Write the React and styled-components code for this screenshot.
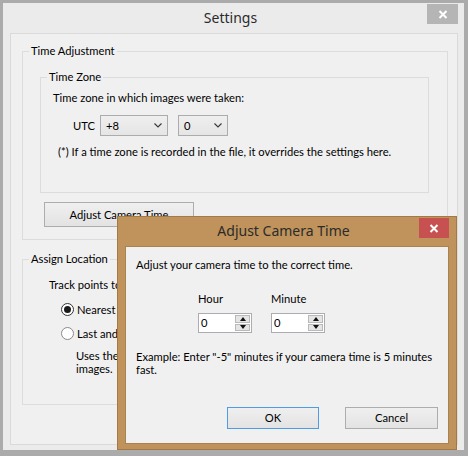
import styled, { createGlobalStyle } from "styled-components"

const GlobalStyle = createGlobalStyle`
  html, body { margin: 0; padding: 0; }
  body {
    width: 468px;
    height: 456px;
    overflow: hidden;
    background: #ffffff;
    font-family: Lato, "Noto Sans", sans-serif;
    font-size: 11.2px;
    color: #000;
  }
  * { box-sizing: border-box; }
`

const Screen = styled.div`
  position: relative;
  width: 468px;
  height: 456px;
`

const Window = styled.div`
  width: 468px;
  height: 456px;
  display: flex;
  flex-direction: column;
  background: #ebebeb;
  border-style: solid;
  border-color: #ababab;
  border-width: 3px 4px 6px 3px;
`

const TitleBar = styled.div`
  height: 30px;
  display: flex;
  align-items: flex-start;
  padding-right: 6px;
`

const TitleText = styled.div`
  flex: 1;
  text-align: center;
  font-family: "Noto Sans", sans-serif;
  font-size: 14px;
  line-height: 16px;
  padding-top: ${(p) => p.top || 7}px;
  padding-left: ${(p) => p.shift || 0}px;
  color: #2b2b2b;
`

const CloseButton = styled.div`
  width: ${(p) => p.w || 31}px;
  height: 20px;
  margin-top: ${(p) => p.top || 1}px;
  background: ${(p) => p.bg || "#b5b5b5"};
  display: flex;
  align-items: center;
  justify-content: center;
`

const Client = styled.div`
  height: 412px;
  margin: 0 6px 0 7px;
  background: #f0f0f0;
  border: 1px solid #dadada;
  padding: 9px 9px 0 11px;
  display: flex;
  flex-direction: column;
`

const Group = styled.fieldset`
  margin: ${(p) => p.mt || 0}px 0 0 0;
  padding: 0;
  border: 1px solid #dcdcdc;
  min-width: 0;
`

const Legend = styled.legend`
  margin-left: 6px;
  padding: 0 2px;
  line-height: 16px;
`

const GroupBody = styled.div`
  padding: ${(p) => p.pad};
`

const Line = styled.div`
  line-height: ${(p) => p.lh || 16}px;
  margin-top: ${(p) => p.mt || 0}px;
  padding-left: ${(p) => p.pl || 0}px;
  white-space: nowrap;
`

const Row = styled.div`
  display: flex;
  align-items: center;
  margin-top: ${(p) => p.mt || 0}px;
  padding-left: ${(p) => p.pl || 0}px;
`

const UtcLabel = styled.span`
  width: 27px;
  line-height: 16px;
`

const Select = styled.div`
  width: ${(p) => p.w}px;
  height: 21px;
  margin-left: ${(p) => p.ml || 0}px;
  border: 1px solid #acacac;
  background: linear-gradient(#efefef, #e5e5e5);
  display: flex;
  align-items: center;
  justify-content: space-between;
  padding: 0 5px 0 5px;
  line-height: 16px;
`

const PushButton = styled.div`
  width: ${(p) => p.w}px;
  height: ${(p) => p.h || 22}px;
  margin-top: ${(p) => p.mt || 0}px;
  margin-left: ${(p) => p.ml || 0}px;
  border: 1px solid ${(p) => (p.primary ? "#4f9be4" : "#adadad")};
  background: linear-gradient(#efefef, #e3e3e3);
  display: flex;
  align-items: center;
  justify-content: center;
  line-height: 16px;
`

const RadioRow = styled.div`
  display: flex;
  align-items: center;
  gap: 3px;
  height: 16px;
  margin-top: 8px;
  padding-left: 12px;
  white-space: nowrap;
`

const RadioCircle = styled.span`
  width: 13px;
  height: 13px;
  border-radius: 50%;
  border: 1px solid ${(p) => (p.checked ? "#333" : "#8a8a8a")};
  background: #fff;
  display: flex;
  align-items: center;
  justify-content: center;
  &::after {
    content: "";
    width: 7px;
    height: 7px;
    border-radius: 50%;
    background: ${(p) => (p.checked ? "#1a1a1a" : "transparent")};
  }
`

const Dialog = styled.div`
  position: absolute;
  left: 117px;
  top: 216px;
  width: 340px;
  height: 234px;
  background: #bf935b;
  border: 1px solid #a27a45;
  display: flex;
  flex-direction: column;
`

const DialogTitle = styled.div`
  height: 29px;
  display: flex;
  align-items: flex-start;
  padding-right: 7px;
`

const DialogClient = styled.div`
  flex: 1;
  margin: 0 7px 5px 7px;
  background: #f0f0f0;
  border: 1px solid #a7834f;
  padding: 10px 10px 14px 10px;
  display: flex;
  flex-direction: column;
`

const Fields = styled.div`
  display: flex;
  gap: 19px;
  margin-top: 18px;
  padding-left: 62px;
`

const Field = styled.div`
  display: flex;
  flex-direction: column;
  gap: 6px;
`

const Spinner = styled.div`
  width: 54px;
  height: 20px;
  border: 1px solid #abadb3;
  background: #fff;
  display: flex;
`

const SpinValue = styled.div`
  flex: 1;
  padding-left: 2px;
  line-height: 18px;
`

const SpinButtons = styled.div`
  width: 17px;
  display: flex;
  flex-direction: column;
  padding: 1px;
  gap: 1px;
`

const SpinHalf = styled.div`
  flex: 1;
  background: #e5e5e5;
  border: 1px solid #b9b9b9;
  display: flex;
  align-items: center;
  justify-content: center;
`

const Triangle = styled.span`
  width: 0;
  height: 0;
  border-left: 3.5px solid transparent;
  border-right: 3.5px solid transparent;
  ${(p) => (p.down ? "border-top: 4px solid #111;" : "border-bottom: 4px solid #111;")}
`

const Buttons = styled.div`
  margin-top: auto;
  display: flex;
  justify-content: flex-end;
  gap: 26px;
`

const CloseX = () => (
  <svg width="10" height="9" viewBox="0 0 10 9">
    <path d="M1.5 1 L8.5 8 M8.5 1 L1.5 8" stroke="#fff" strokeWidth="2" />
  </svg>
)

const Chevron = () => (
  <svg width="8" height="5" viewBox="0 0 8 5">
    <polyline points="0.5,0.5 4,4 7.5,0.5" fill="none" stroke="#3c3c3c" strokeWidth="1.2" />
  </svg>
)

const Spin = ({ value }) => (
  <Spinner>
    <SpinValue>{value}</SpinValue>
    <SpinButtons>
      <SpinHalf>
        <Triangle />
      </SpinHalf>
      <SpinHalf>
        <Triangle down />
      </SpinHalf>
    </SpinButtons>
  </Spinner>
)

const App = () => {
  return (
    <Screen>
      <GlobalStyle />
      <Window>
        <TitleBar>
          <TitleText shift={31}>Settings</TitleText>
          <CloseButton>
            <CloseX />
          </CloseButton>
        </TitleBar>
        <Client>
          <Group>
            <Legend>Time Adjustment</Legend>
            <GroupBody pad="10px 18px 12px 17px">
              <Group>
                <Legend>Time Zone</Legend>
                <GroupBody pad="5px 0 32px 12px">
                  <Line>Time zone in which images were taken:</Line>
                  <Row mt={9} pl={20}>
                    <UtcLabel>UTC</UtcLabel>
                    <Select w={68}>
                      <span>+8</span>
                      <Chevron />
                    </Select>
                    <Select w={50} ml={10}>
                      <span>0</span>
                      <Chevron />
                    </Select>
                  </Row>
                  <Line mt={8} pl={5}>
                    (*) If a time zone is recorded in the file, it overrides the settings here.
                  </Line>
                </GroupBody>
              </Group>
              <PushButton w={150} h={25} mt={9} ml={4}>
                Adjust Camera Time
              </PushButton>
            </GroupBody>
          </Group>
          <Group mt={11}>
            <Legend>Assign Location</Legend>
            <GroupBody pad="10px 0 29px 26px">
              <Line>Track points to use for locating images:</Line>
              <RadioRow>
                <RadioCircle checked />
                <span>Nearest track point</span>
              </RadioRow>
              <RadioRow>
                <RadioCircle />
                <span>Last and next track points (interpolate)</span>
              </RadioRow>
              <Line lh={13} mt={8} pl={27}>
                Uses the last and next track points to interpolate the location of
                <br />
                images.
              </Line>
            </GroupBody>
          </Group>
        </Client>
      </Window>

      <Dialog>
        <DialogTitle>
          <TitleText shift={30} top={6}>
            Adjust Camera Time
          </TitleText>
          <CloseButton w={30} top={0} bg="#c75050">
            <CloseX />
          </CloseButton>
        </DialogTitle>
        <DialogClient>
          <Line>Adjust your camera time to the correct time.</Line>
          <Fields>
            <Field>
              <Line>Hour</Line>
              <Spin value="0" />
            </Field>
            <Field>
              <Line>Minute</Line>
              <Spin value="0" />
            </Field>
          </Fields>
          <Line lh={13} mt={17}>
            Example: Enter "-5" minutes if your camera time is 5 minutes
            <br />
            fast.
          </Line>
          <Buttons>
            <PushButton w={92} primary>
              OK
            </PushButton>
            <PushButton w={93}>Cancel</PushButton>
          </Buttons>
        </DialogClient>
      </Dialog>
    </Screen>
  )
}

export default App
